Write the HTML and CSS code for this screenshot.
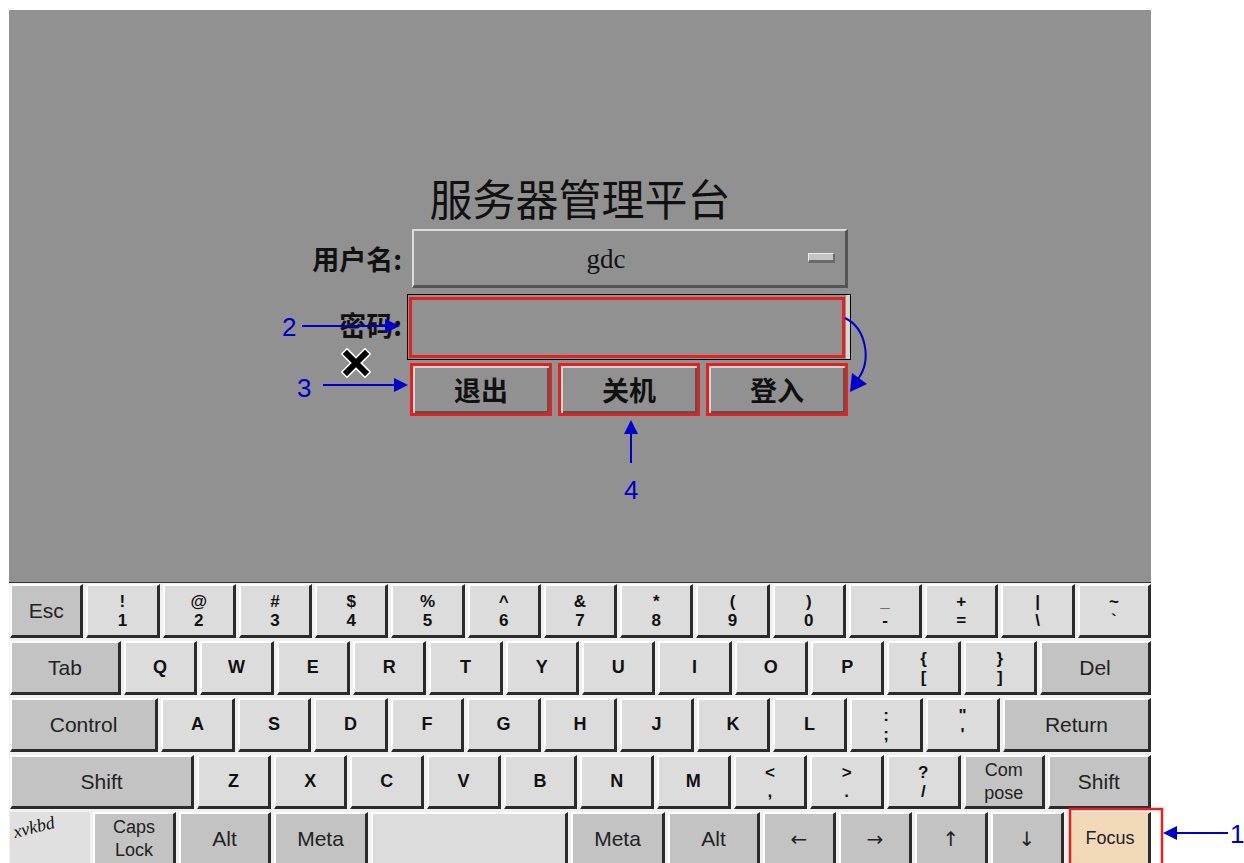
FILE: index.html
```html
<!DOCTYPE html>
<html>
<head>
<meta charset="utf-8">
<title>服务器管理平台</title>
<link rel="stylesheet" href="styles.css">
</head>
<body>
<div class="screen">
  <div class="login">
    <h1 class="title">服务器管理平台</h1>
    <div class="form">
      <label class="lbl">用户名:</label>
      <div class="select">
        <span class="select-val">gdc</span>
        <span class="select-ind"></span>
      </div>
      <label class="lbl">密码:</label>
      <div class="pwd"><div class="pwd-in"></div></div>
      <div class="btns">
        <button class="btn">退出</button>
        <button class="btn">关机</button>
        <button class="btn">登入</button>
      </div>
      <!-- X pointer sitting on the form -->
      <svg class="cursor" width="30" height="30" viewBox="0 0 30 30">
        <path d="M6 6 L24 24 M24 6 L6 24" stroke="#fff" stroke-width="9" stroke-linecap="square"/>
        <path d="M6 6 L24 24 M24 6 L6 24" stroke="#000" stroke-width="6" stroke-linecap="square"/>
      </svg>
    </div>
  </div>

  <div class="kbd">
    <div class="row">
      <div class="key mod">Esc</div>
      <div class="key dual"><span>!</span><span>1</span></div>
      <div class="key dual"><span>@</span><span>2</span></div>
      <div class="key dual"><span>#</span><span>3</span></div>
      <div class="key dual"><span>$</span><span>4</span></div>
      <div class="key dual"><span>%</span><span>5</span></div>
      <div class="key dual"><span>^</span><span>6</span></div>
      <div class="key dual"><span>&amp;</span><span>7</span></div>
      <div class="key dual"><span>*</span><span>8</span></div>
      <div class="key dual"><span>(</span><span>9</span></div>
      <div class="key dual"><span>)</span><span>0</span></div>
      <div class="key dual"><span>_</span><span>-</span></div>
      <div class="key dual"><span>+</span><span>=</span></div>
      <div class="key dual"><span>|</span><span>\</span></div>
      <div class="key dual"><span>~</span><span>`</span></div>
    </div>
    <div class="row">
      <div class="key mod w15">Tab</div>
      <div class="key">Q</div>
      <div class="key">W</div>
      <div class="key">E</div>
      <div class="key">R</div>
      <div class="key">T</div>
      <div class="key">Y</div>
      <div class="key">U</div>
      <div class="key">I</div>
      <div class="key">O</div>
      <div class="key">P</div>
      <div class="key dual"><span>{</span><span>[</span></div>
      <div class="key dual"><span>}</span><span>]</span></div>
      <div class="key mod w15">Del</div>
    </div>
    <div class="row">
      <div class="key mod w2">Control</div>
      <div class="key">A</div>
      <div class="key">S</div>
      <div class="key">D</div>
      <div class="key">F</div>
      <div class="key">G</div>
      <div class="key">H</div>
      <div class="key">J</div>
      <div class="key">K</div>
      <div class="key">L</div>
      <div class="key dual"><span>:</span><span>;</span></div>
      <div class="key dual"><span>"</span><span>'</span></div>
      <div class="key mod w2">Return</div>
    </div>
    <div class="row">
      <div class="key mod w25">Shift</div>
      <div class="key">Z</div>
      <div class="key">X</div>
      <div class="key">C</div>
      <div class="key">V</div>
      <div class="key">B</div>
      <div class="key">N</div>
      <div class="key">M</div>
      <div class="key dual"><span>&lt;</span><span>,</span></div>
      <div class="key dual"><span>&gt;</span><span>.</span></div>
      <div class="key dual"><span>?</span><span>/</span></div>
      <div class="key mod small w11"><span>Com</span><span>pose</span></div>
      <div class="key mod w14">Shift</div>
    </div>
    <div class="row">
      <div class="key logo"><span>xvkbd</span></div>
      <div class="key mod small b-caps"><span>Caps</span><span>Lock</span></div>
      <div class="key mod b-alt">Alt</div>
      <div class="key mod b-meta">Meta</div>
      <div class="key b-space"></div>
      <div class="key mod b-meta">Meta</div>
      <div class="key mod b-alt">Alt</div>
      <div class="key mod arrow b-arrow">←</div>
      <div class="key mod arrow b-arrow">→</div>
      <div class="key mod arrow b-arrow">↑</div>
      <div class="key mod arrow b-arrow">↓</div>
      <div class="key mod focus">Focus</div>
    </div>
  </div>
</div>

<!-- callouts drawn over the screenshot -->
<svg class="notes" width="1244" height="863" viewBox="0 0 1244 863">
  <g fill="#0000cc" font-family="Liberation Sans, Arial, sans-serif" font-size="26">
    <text x="282" y="336">2</text>
    <text x="297" y="397">3</text>
    <text x="624" y="499">4</text>
    <text x="1230" y="843">1</text>
  </g>
  <g stroke="#0000cc" stroke-width="2" fill="none">
    <line x1="302" y1="326" x2="388" y2="326"/>
    <line x1="323" y1="385" x2="396" y2="385"/>
    <line x1="631" y1="463" x2="631" y2="432"/>
    <line x1="1228" y1="833" x2="1175" y2="833"/>
    <path d="M845 318 C866 328 872 360 858 379"/>
  </g>
  <g fill="#0000cc">
    <polygon points="400,326 385,319 385,333"/>
    <polygon points="408,385 394,378 394,392"/>
    <polygon points="631,420 624,434 638,434"/>
    <polygon points="1163,833 1177,826 1177,840"/>
    <polygon points="850,392 852,373 867,384"/>
  </g>
  <rect x="1070" y="809" width="92" height="60" fill="none" stroke="#e42020" stroke-width="2.5"/>
</svg>
</body>
</html>
```

FILE: styles.css
```css
body {
  margin: 0;
  width: 1244px;
  height: 863px;
  position: relative;
  overflow: hidden;
  background-color: #fff;
  font-family: "Liberation Sans", Arial, sans-serif;
}

.screen {
  margin: 10px 0 0 9px;
  width: 1142px;
  height: 853px;
  overflow: hidden;
  background-color: #919191;
  display: flex;
  flex-direction: column;
}

/* login box */
.login {
  flex: 0 0 572px;
  box-sizing: border-box;
  padding-top: 163px;
  display: flex;
  flex-direction: column;
  align-items: center;
}

.title {
  margin: 0 0 8px;
  font-family: "Noto Sans CJK SC", sans-serif;
  font-weight: normal;
  font-size: 43px;
  line-height: 48px;
  color: #111;
}

.form {
  position: relative;
  display: grid;
  grid-template-columns: 98px 444px;
}

.lbl {
  grid-column: 1;
  align-self: center;
  text-align: right;
  padding-right: 5px;
  font-family: "Noto Sans CJK SC", sans-serif;
  font-weight: bold;
  font-size: 27px;
  color: #111;
}

.select {
  grid-column: 2;
  margin-left: 5px;
  width: 436px;
  height: 59px;
  box-sizing: border-box;
  border-style: solid;
  border-width: 2px 3px 3px 2px;
  border-color: #dcdcdc #555 #555 #dcdcdc;
  display: flex;
  align-items: center;
}

.select-val {
  flex: 1;
  text-align: center;
  font-family: "Liberation Serif", serif;
  font-size: 27px;
  color: #111;
  padding-top: 3px;
}

.select-ind {
  width: 27px;
  height: 10px;
  margin: 0 10px 0 10px;
  box-sizing: border-box;
  background-color: #c4c4c4;
  border-style: solid;
  border-width: 1px 2px 3px 1px;
  border-color: #ececec #6a6a6a #6a6a6a #ececec;
}

.pwd {
  grid-column: 2;
  margin-top: 6px;
  height: 66px;
  box-sizing: border-box;
  border: 1px solid #000;
  padding: 2px 5px 1px 1px;
  box-shadow: inset -4px 0 0 #d6d6d6;
}

.pwd-in {
  height: 100%;
  box-sizing: border-box;
  border: 3px solid #e42020;
}

.btns {
  grid-column: 2;
  margin-top: 3px;
  padding: 0 3px;
  display: flex;
  gap: 6px;
}

.btn {
  flex: 1;
  height: 53px;
  padding: 0;
  border: 3px solid #e42020;
  background-color: #919191;
  box-shadow: inset 2px 2px 0 #d4d4d4, inset -2px -2px 0 #555;
  font-family: "Noto Sans CJK SC", sans-serif;
  font-weight: bold;
  font-size: 27px;
  color: #111;
}

.cursor {
  position: absolute;
  left: 32px;
  top: 119px;
}

/* on-screen keyboard */
.kbd {
  flex: none;
  border-top: 1px solid #333;
  padding: 1px 0 0 1px;
  background-color: #f0f0f0;
  display: flex;
  flex-direction: column;
  gap: 3px;
}

.row {
  display: flex;
  gap: 3px;
  height: 54px;
}

.key {
  flex: 1 1 0;
  min-width: 0;
  box-sizing: border-box;
  border-style: solid;
  border-width: 2px 3px 3px 2px;
  border-color: #fff #2b2b2b #2b2b2b #fff;
  background-color: #dcdcdc;
  display: flex;
  flex-direction: column;
  align-items: center;
  justify-content: center;
  font-weight: bold;
  font-size: 18px;
  color: #111;
}

.dual {
  font-size: 17px;
  line-height: 19px;
}

.mod {
  background-color: #c3c3c3;
  font-weight: normal;
  font-size: 21px;
  color: #222;
}

.small {
  font-size: 18px;
  line-height: 23px;
}

.arrow {
  font-family: "DejaVu Sans", sans-serif;
  font-size: 20px;
}

.w15 { flex-grow: 1.55; }
.w2 { flex-grow: 2.09; }
.w25 { flex-grow: 2.61; }
.w11 { flex-grow: 1.11; }
.w14 { flex-grow: 1.43; }

.logo {
  flex: 0 0 80px;
  border-color: #e0e0e0;
  background-color: #e0e0e0;
  align-items: flex-start;
  justify-content: flex-start;
  padding: 3px 0 0 1px;
}

.logo span {
  display: inline-block;
  transform: rotate(-14deg);
  font-family: "Liberation Serif", serif;
  font-style: italic;
  font-weight: normal;
  font-size: 18px;
  color: #111;
}

.b-caps { flex: 0 0 83px; }
.b-alt { flex: 0 0 92px; }
.b-meta { flex: 0 0 94px; }
.b-space { flex: 0 0 197px; }
.b-arrow { flex: 0 0 73px; }

.focus {
  margin-left: 3px;
  background-color: #f1d8b8;
  border-color: #f1d8b8 #2b2b2b #2b2b2b #f1d8b8;
  font-size: 18px;
}

.notes {
  position: absolute;
  left: 0;
  top: 0;
  pointer-events: none;
}
```
